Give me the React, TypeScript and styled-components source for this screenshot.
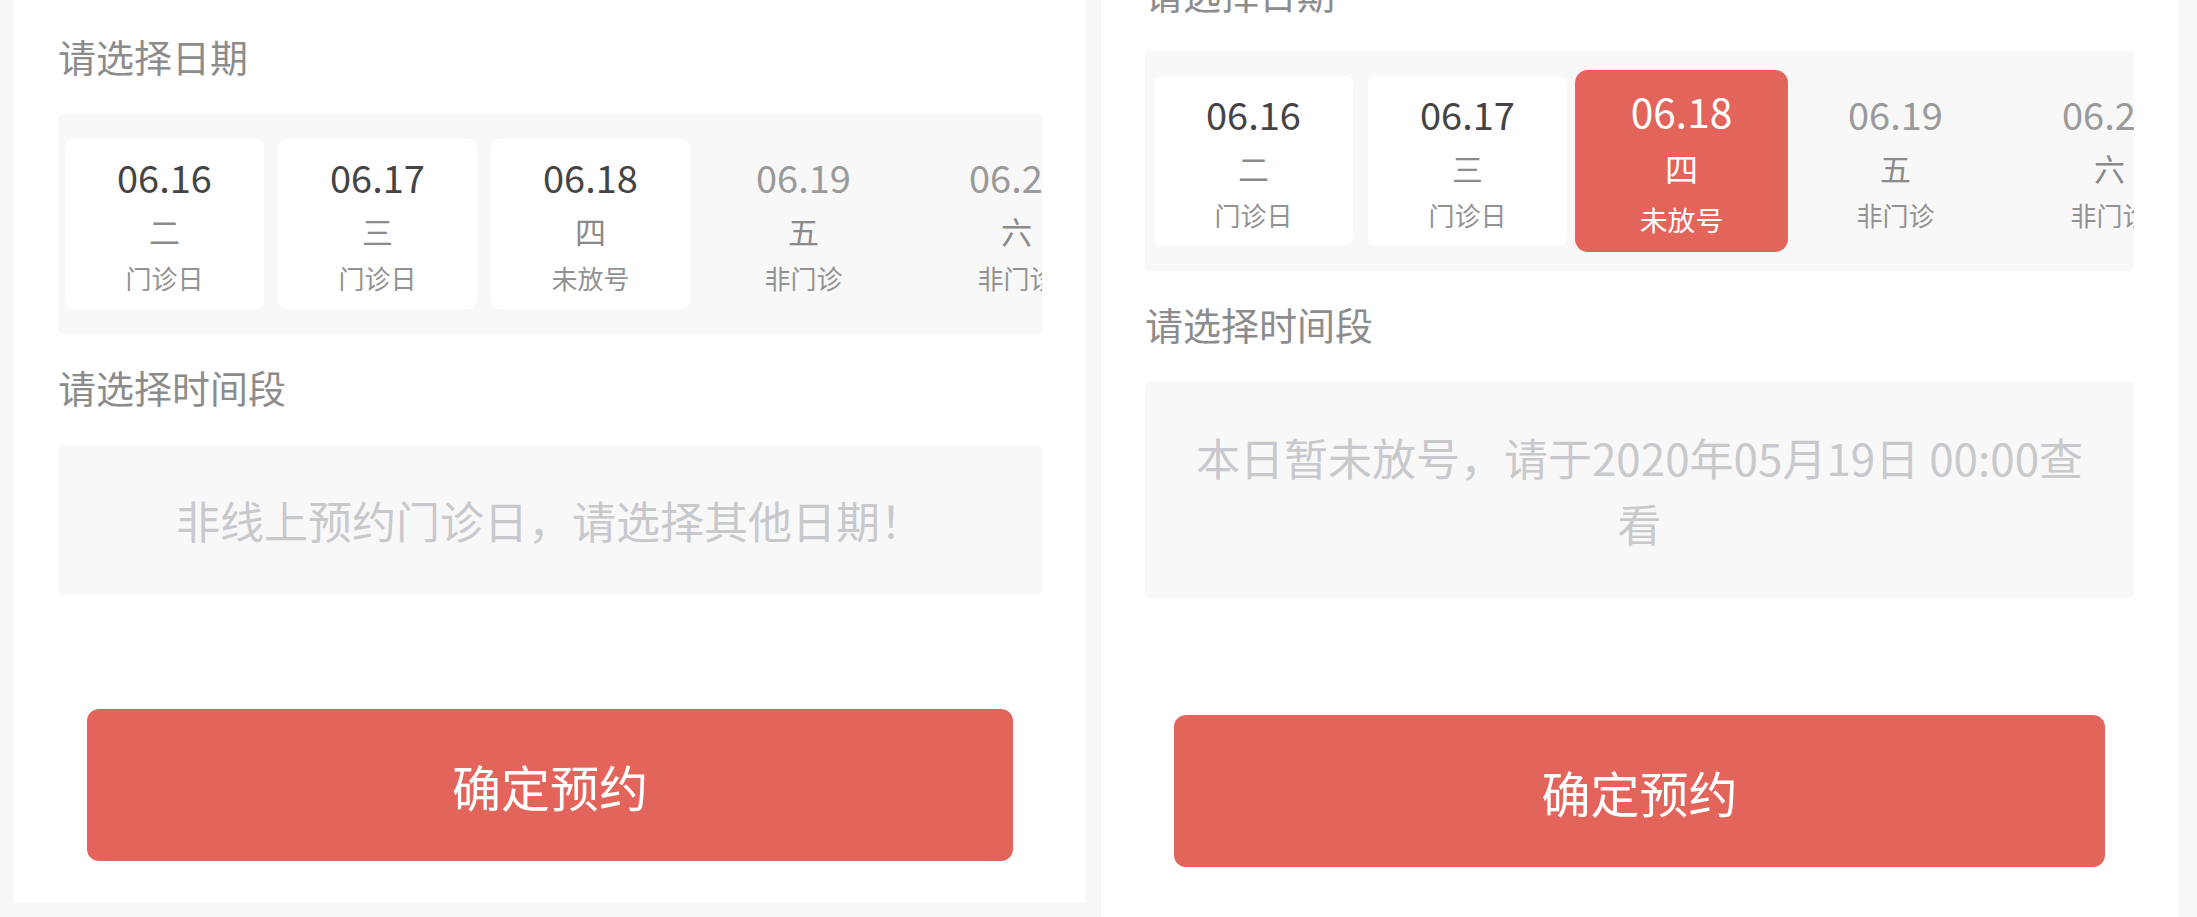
import React from 'react';
import styled, { createGlobalStyle, css } from 'styled-components';

const GlobalStyle = createGlobalStyle`
  html, body {
    margin: 0;
    padding: 0;
    background: #f7f7f8;
    font-family: "Noto Sans CJK SC", "Noto Sans", sans-serif;
  }
`;

const Page = styled.div`
  display: flex;
  align-items: flex-start;
  gap: 15px;
  height: 917px;
  padding-left: 14px;
  overflow: hidden;
  background: #f7f7f8;
`;

const Panel = styled.section<{ $width: number; $height: string }>`
  flex-shrink: 0;
  width: ${p => p.$width}px;
  height: ${p => p.$height};
  background: #fff;
  overflow: hidden;
  box-sizing: border-box;
  padding: 0 44px;
`;

const Content = styled.div<{ $shift: number }>`
  display: flex;
  flex-direction: column;
  margin-top: ${p => p.$shift}px;
`;

const Title = styled.div`
  margin: 26px 0 31px;
  font-size: 38px;
  line-height: 54px;
  color: #8c8c8c;
`;

const DateStrip = styled.div<{ $inset: number; $gap: number }>`
  display: flex;
  align-items: center;
  gap: ${p => p.$gap}px;
  height: 220px;
  padding: 0 ${p => p.$inset}px;
  background: #f8f8f8;
  border-radius: 4px;
  overflow: hidden;
`;

type DayState = 'open' | 'active' | 'closed';

const DateCard = styled.div<{ $state: DayState }>`
  flex-shrink: 0;
  display: flex;
  flex-direction: column;
  align-items: center;
  box-sizing: border-box;
  width: 199px;
  height: 170px;
  padding-top: 12px;
  border-radius: 8px;
  background: ${p => (p.$state === 'open' ? '#fff' : 'transparent')};
  color: ${p => (p.$state === 'closed' ? '#9a9a9a' : '#444')};
  ${p => p.$state === 'active' && css`
    background: #e3645a;
    color: #fff;
    border-radius: 12px;
    transform: scale(1.07);
  `}
`;

const DateText = styled.div`
  font-size: 38px;
  line-height: 51px;
`;

const Weekday = styled.div<{ $light?: boolean }>`
  font-size: 31px;
  line-height: 58px;
  color: ${p => (p.$light ? '#fff' : '#8a8a8a')};
`;

const Status = styled.div<{ $light?: boolean }>`
  font-size: 26px;
  line-height: 36px;
  color: ${p => (p.$light ? '#fff' : '#929292')};
`;

const TimeBox = styled.div`
  padding: 42px 44px;
  background: #f8f8f9;
  border-radius: 4px;
  font-size: 44px;
  line-height: 66px;
  color: #c8c9cc;
  text-align: center;
`;

const ConfirmButton = styled.button<{ $top: number }>`
  display: block;
  height: 152px;
  margin: ${p => p.$top}px 29px 0;
  border: none;
  border-radius: 12px;
  background: #e3645a;
  color: #fff;
  font-family: inherit;
  font-size: 49px;
  cursor: pointer;
`;

interface IDay {
  date: string;
  week: string;
  status: string;
  closed: boolean;
}

const days: IDay[] = [
  { date: '06.16', week: '二', status: '门诊日', closed: false },
  { date: '06.17', week: '三', status: '门诊日', closed: false },
  { date: '06.18', week: '四', status: '未放号', closed: false },
  { date: '06.19', week: '五', status: '非门诊', closed: true },
  { date: '06.20', week: '六', status: '非门诊', closed: true },
];

interface IBookingProps {
  width: number;
  height: string;
  shift: number;
  inset: number;
  gap: number;
  buttonTop: number;
  active?: string;
  message: string;
}

const Booking = ({ width, height, shift, inset, gap, buttonTop, active, message }: IBookingProps) => (
  <Panel $width={width} $height={height}>
    <Content $shift={shift}>
      <Title>请选择日期</Title>
      <DateStrip $inset={inset} $gap={gap}>
        {days.map(day => {
          const state: DayState = day.date === active ? 'active' : day.closed ? 'closed' : 'open';
          const light = state === 'active';
          return (
            <DateCard key={day.date} $state={state}>
              <DateText>{day.date}</DateText>
              <Weekday $light={light}>{day.week}</Weekday>
              <Status $light={light}>{day.status}</Status>
            </DateCard>
          );
        })}
      </DateStrip>
      <Title>请选择时间段</Title>
      <TimeBox>{message}</TimeBox>
      <ConfirmButton $top={buttonTop}>确定预约</ConfirmButton>
    </Content>
  </Panel>
);

const App = () => (
  <>
    <GlobalStyle />
    <Page>
      <Booking
        width={1072}
        height="903px"
        shift={3}
        inset={7}
        gap={14}
        buttonTop={114}
        message="非线上预约门诊日，请选择其他日期！"
      />
      <Booking
        width={1077}
        height="100%"
        shift={-60}
        inset={9}
        gap={15}
        buttonTop={117}
        active="06.18"
        message="本日暂未放号，请于2020年05月19日 00:00查看"
      />
    </Page>
  </>
);

export default App;
